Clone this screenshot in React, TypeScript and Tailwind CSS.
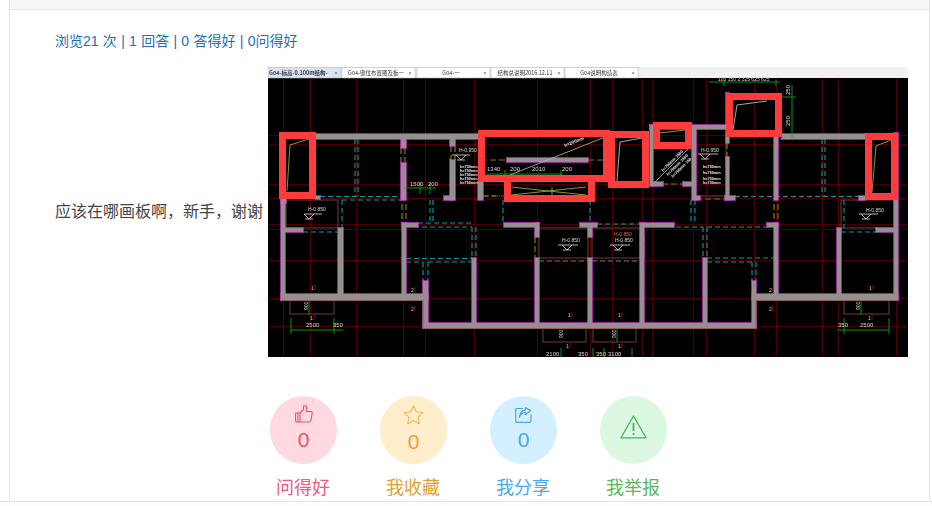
import React from "react";

type R = [number, number, number, number];

const walls: R[] = [
  [281, 198, 285, 300], [281, 294, 428, 300], [423, 281, 428, 328], [423, 323, 756, 328],
  [752, 281, 756, 328], [752, 294, 898, 300], [894, 133, 898, 300], [338, 228, 343, 300],
  [402, 223, 406, 300], [472, 258, 476, 328], [535, 223, 539, 237], [535, 258, 539, 328],
  [588, 224, 592, 237], [588, 258, 592, 328], [640, 223, 644, 328], [703, 258, 707, 328],
  [774, 223, 778, 300], [837, 228, 841, 300], [285, 228, 303, 232], [402, 223, 418, 227],
  [504, 223, 539, 227], [580, 223, 597, 227], [641, 223, 674, 227], [767, 223, 778, 227],
  [876, 228, 894, 232], [316, 134, 478, 139], [401, 139, 406, 148], [401, 163, 406, 200],
  [450, 139, 455, 146], [450, 160, 455, 200], [444, 196, 453, 200], [478, 182, 483, 200],
  [316, 196, 320, 199], [507, 158, 588, 162], [650, 125, 653, 186], [650, 125, 726, 129],
  [692, 129, 696, 200], [726, 93, 729, 143], [726, 157, 729, 200], [725, 196, 735, 200],
  [774, 134, 778, 200], [782, 134, 865, 139], [859, 196, 865, 200], [653, 182, 663, 186],
  [683, 182, 692, 186], [281, 198, 285, 200], [696, 196, 700, 200], [281, 198, 286, 203],
];

const redBoxes: R[] = [
  [279, 132, 316, 199], [478, 130, 610, 182], [504, 175, 595, 202], [608, 131, 649, 188],
  [653, 122, 692, 149], [726, 93, 782, 137], [865, 133, 898, 200],
];

const gridH = [135, 144, 184, 198, 224, 229, 260, 298, 326];
const gridV = [283, 310, 356, 403, 425, 474, 537, 590, 612, 642, 652, 693, 706, 754, 776, 822, 838, 896];

const tealDashes = [
  "M320 196.5H402", "M342 200H402", "M342 200V228", "M303 232H338", "M355 139V196", "M358 139V196",
  "M418 223H472", "M406 227H472", "M472 227V258", "M476 227V258", "M406 258.500H472", "M406 262H423",
  "M428 262H472", "M423 262V281", "M428 262V281", "M539 261H588", "M592 261H640", "M644 227H703",
  "M707 227H767", "M703 227V258", "M707 227V258", "M707 258H774", "M707 262H752", "M756 262V281",
  "M752 262V281", "M735 196.500H859", "M780 139H782", "M822 139V196", "M825 139V196", "M841 232H876",
  "M483 196H500", "M844 200V228", "M597 224H640", "M691 200V224", "M695 200V224", "M430 200V224",
  "M433 200V224", "M503 200V224", "M590 200V224",
];

const olive = [
  "M401 148V163", "M405 148V163", "M451 146V160", "M455 146V160", "M402 204V222", "M406 204V222",
  "M535 237V258", "M644 237V258", "M727 143V157", "M774 204V222", "M778 204V222", "M481 160H507",
  "M588 160H605", "M483 196H507", "M653 184H683", "M696 199H727",
];

const brown: R[] = [
  [286, 200, 338, 228], [539, 228, 588, 258], [592, 228, 640, 258], [841, 200, 894, 228],
  [290, 300, 334, 314], [543, 328, 586, 342], [593, 328, 636, 342], [844, 300, 889, 314],
  [696, 129, 726, 196],
];

const labels: [number, number, string, string?][] = [
  [459, 152, "H-0.950"], [308, 211, "H-0.850"], [701, 152, "H-0.950"], [866, 212, "H-0.850"],
  [562, 242, "H-0.850"], [615, 242, "H-0.850"], [614, 236, "H-0.850", "#ff6a00"],
  [410, 186, "1500"], [428, 186, "200"], [487, 171, "1340"], [510, 171, "200"], [532, 171, "2010"],
  [562, 171, "200"], [306, 327, "2500"], [333, 327, "350"], [838, 327, "350"], [860, 327, "2500"],
  [546, 356, "2100"], [578, 356, "350"], [596, 356, "350"], [608, 356, "3100"],
];

function Cad() {
  return (
    <svg width="640" height="290" viewBox="268 67 640 290" className="block shrink-0 blur-[0.35px]">
      <rect x="268" y="67" width="640" height="290" fill="#000" />
      <rect x="268" y="67" width="640" height="11" fill="#f1f1f1" />
      {[268, 342, 417, 491, 565].map((x, i) => (
        <g key={x}>
          <rect x={x} y="67.500" width="73" height="10.500" fill={i === 0 ? "#dbe6f5" : "#fff"} stroke="#b5b5b5" strokeWidth="0.6" />
          <text x={x + (i === 0 ? 1 : 34)} y="74.500" fontSize="5.500" fill="#333" fontWeight={i === 0 ? 700 : 400} textAnchor={i === 0 ? "start" : "middle"} fontFamily="'Noto Sans CJK SC',sans-serif">
            {["G04-标高-0.100m结构-", "G04-键位布置图及板一", "G04-一", "结构总说明2016.12.11", "G04说明构造表"][i]}
          </text>
          <text x={x + 68} y="74.500" fontSize="6" fill="#666" textAnchor="middle">×</text>
        </g>
      ))}
      {gridH.map((y) => <path key={y} d={`M268 ${y}.5H908`} stroke="#5c0000" strokeWidth="0.8" />)}
      {gridV.map((x) => <path key={x} d={`M${x}.5 78V357`} stroke="#5c0000" strokeWidth="0.8" />)}
      {brown.map(([a, b, c, d], i) => (
        <rect key={i} x={a} y={b} width={c - a} height={d - b} fill="none" stroke="#80403f" strokeWidth="0.9" />
      ))}
      {tealDashes.map((d, i) => <path key={i} d={d} stroke="#0b9aa3" strokeWidth="1.100" strokeDasharray="5 3" fill="none" />)}
      {olive.map((d, i) => <path key={i} d={d} stroke="#7e7d10" strokeWidth="1.200" strokeDasharray="6 3" fill="none" />)}
      {walls.map(([a, b, c, d], i) => (
        <rect key={i} x={a - 0.4} y={b - 0.4} width={c - a + 0.8} height={d - b + 0.8} fill="none" stroke="#d23fd2" strokeWidth="0.7" />
      ))}
      {walls.map(([a, b, c, d], i) => (
        <rect key={i} x={a} y={b} width={c - a} height={d - b} fill="#968f8f" />
      ))}
      <path d="M280.500 300.500H423V328.500H756V300.500H898" fill="none" stroke="#8d5f5f" strokeWidth="1" />
      <g stroke="#0aa60a" strokeWidth="0.9" fill="none">
        <path d="M404 188H436M430 183V194M420 182V194" />
        <path d="M291 330H343M291 318V334M334 318V334" />
        <path d="M837 330H889M844 318V334M889 318V334" />
        <path d="M709 82H780M724 80V86M776 80V86M781 93V135M770 97H796M792 85V137" />
        <path d="M486 174H562M505 170V176M561 170V176" />
        <path d="M309 300V315M861 300V315M617 328V342M561 348V357M593 348V357M604 348V357M632 348V357" />
      </g>
      <g stroke="#ddd" strokeWidth="0.8" fill="none">
        <path d="M452 155H470M456 155L461 160L466 155M457 160H465" />
        <path d="M304 214H322M304 214L309 219L314 214M305 219H313" />
        <path d="M698 154H718M700 154L705 159L710 154M701 159H709" />
        <path d="M859 214H878M861 214L866 219L871 214M862 219H870" />
        <path d="M558 245H578M562 245L567 250L572 245M563 250H571" />
        <path d="M610 245H630M613 245L618 250L623 245M614 250H622" />
        <path d="M510 175L605 137" stroke="#bbb" />
        <path d="M655 182L690 147" stroke="#bbb" />
      </g>
      <g fill="#f0f0f0" fontSize="3.800" fontFamily="'Liberation Sans',sans-serif" fontWeight="700">
        {[168, 172, 176, 180, 184].map((y) => <text key={y} x="460" y={y}>h=750mm</text>)}
        {[168, 174, 180, 184].map((y) => <text key={y} x="703" y={y}>h=750mm</text>)}
        <text x="0" y="0" transform="translate(663,172) rotate(-45)" fontSize="4">h=750mm 1500</text>
        <text x="0" y="0" transform="translate(668,176) rotate(-45)" fontSize="4">h=750mm 1500</text>
        <text x="0" y="0" transform="translate(673,178) rotate(-45)" fontSize="4">h=750mm 150</text>
        <text x="0" y="0" transform="translate(565,147) rotate(-22)" fontSize="4.500">h=200mm</text>
      </g>
      <g fontSize="6" fontFamily="'Liberation Sans',sans-serif">
        {labels.map(([x, y, t, c], i) => <text key={i} x={x} y={y} fill={c ?? "#d8d8d8"} fontSize={t.startsWith("H") ? 5 : 6}>{t}</text>)}
        <text transform="translate(790,126) rotate(-90)" fill="#d8d8d8">250</text>
        <text transform="translate(790,95) rotate(-90)" fill="#d8d8d8">250</text>
        <text transform="translate(308,310) rotate(-90)" fill="#d8d8d8" fontSize="5">900</text>
        <text transform="translate(860,310) rotate(-90)" fill="#d8d8d8" fontSize="5">900</text>
        <text transform="translate(563,338) rotate(-90)" fill="#d8d8d8" fontSize="5">900</text>
        <text transform="translate(616,338) rotate(-90)" fill="#d8d8d8" fontSize="5">900</text>
        {[[311, 290], [411, 292], [411, 311], [310, 320], [568, 317], [618, 317], [769, 292], [769, 311], [869, 290], [868, 320], [566, 348], [618, 348]].map(([x, y], i) => (
          <g key={i}>
            <text x={x} y={y} fontSize="5" fill="#ccc">{i === 1 || i === 2 || i === 6 || i === 7 ? 2 : 1}</text>
            <path d={`M${x + 4} ${y - 5}V${y}`} stroke="#a00" strokeWidth="1" />
          </g>
        ))}
        <text x="718" y="81" fill="#ccc" fontSize="5">100 150 2.325 625 625</text>
      </g>
      <g fill="none" strokeWidth="0.9">
        <path d="M287 191L290 145L309 139" stroke="#a3a32a" />
        <path d="M872 192L876 146L891 140" stroke="#a3a32a" />
        <path d="M617 181L620 142L642 138" stroke="#bbb" />
        <path d="M733 130L737 105L767 101" stroke="#bbb" />
        <path d="M660 133L685 130" stroke="#a3a32a" />
        <path d="M511 187L586 195M511 195L586 187M552 187V195" stroke="#a3a32a" />
      </g>
      {redBoxes.map(([a, b, c, d], i) => (
        <rect key={i} x={a + 3.500} y={b + 3.500} width={c - a - 7} height={d - b - 7} fill="none" stroke="#ff3b3b" strokeWidth="7" />
      ))}
    </svg>
  );
}

const ThumbIcon = () => (
  <svg width="18" height="18" viewBox="0 0 18 18" fill="none" stroke="#f0506e" strokeWidth="1.100" strokeLinejoin="round">
    <path d="M.6 8H5V17H2Q.6 17 .6 15.500Z" />
    <path d="M3 8V17" />
    <path d="M5 8L8.500 4.500V1.800Q8.500.6 10 .7 11.800 1 11.500 3.500L11 6.500H15.800Q17.500 6.700 17.200 8.300L16 15.300Q15.700 17 14 17H5" />
  </svg>
);

const StarIcon = () => (
  <svg width="21" height="20" viewBox="0 0 21 20" fill="none" stroke="#f5b350" strokeWidth="1.100" strokeLinejoin="round">
    <path d="M10.500.9L13.300 6.800 19.900 7.700 15.100 12.200 16.300 18.700 10.500 15.500 4.700 18.700 5.900 12.200 1.100 7.700 7.700 6.800Z" />
  </svg>
);

const ShareIcon = () => (
  <svg width="17" height="16" viewBox="0 0 17 16" fill="none" stroke="#42a9f0" strokeWidth="1.200" strokeLinejoin="round">
    <path d="M8 1.500H1.800Q.7 1.500.7 2.600V14Q.7 15.300 1.800 15.300H14.500Q16 15.300 16 14V7.500" />
    <path d="M4.500 10.500Q5 6 10.500 5.300V7.500L15.800 3.500 10.500.6V2.800Q5 3.500 4.500 10.500Z" />
  </svg>
);

const AlertIcon = () => (
  <svg width="27" height="24" viewBox="0 0 27 24" fill="none" stroke="#3cb55a" strokeWidth="1.300" strokeLinejoin="round">
    <path d="M13.500 1L26 22.800H1Z" />
    <path d="M13.500 8V16" strokeWidth="1.800" />
    <path d="M13.500 18V19.800" strokeWidth="1.800" />
  </svg>
);

const actions = [
  { label: "问得好", icon: <ThumbIcon />, value: "0", circle: "bg-[#ffd9e0]", text: "text-[#f0506e]", labelColor: "text-[#ee5a80]", box: "pt-[9px]" },
  { label: "我收藏", icon: <StarIcon />, value: "0", circle: "bg-[#ffedcc]", text: "text-[#e8a138]", labelColor: "text-[#e3a032]", box: "pt-[9px]" },
  { label: "我分享", icon: <ShareIcon />, value: "0", circle: "bg-[#d4efff]", text: "text-[#42a9f0]", labelColor: "text-[#48a8ee]", box: "pt-[11px]" },
  { label: "我举报", icon: <AlertIcon />, value: "", circle: "bg-[#dcf8e2]", text: "text-[#3cb55a]", labelColor: "text-[#5ab55e]", box: "pt-[19px]" },
];

export default function App() {
  return (
    <div className="h-[506px] w-[932px] overflow-hidden bg-white font-['Liberation_Sans','Noto_Sans_CJK_SC',sans-serif]">
      <div className="ml-[9px] h-[501px] w-[921px] border-x border-[#e4e4e4]">
        <div className="h-[10px] border-b border-[#e6e6e6] bg-[#f8f8f8]" />
        <div className="pl-[45px]">
          <p className="pt-[21px] text-[14px] leading-[20px] text-[#1d6fb8] [word-spacing:0.4px]">
            浏览21 次 | 1 回答 | 0 答得好 | 0问得好
          </p>
          <div className="mt-[16px] flex items-center gap-[5px]">
            <span className="w-[208px] shrink-0 whitespace-nowrap text-[16px] leading-[22px] text-[#444]">
              应该在哪画板啊，新手，谢谢
            </span>
            <Cad />
          </div>
          <div className="ml-[215px] mt-[39px] flex gap-[43px]">
            {actions.map((a) => (
              <div key={a.label} className="flex w-[67px] flex-col items-center">
                <div className={`flex h-[68px] w-[67px] flex-col items-center rounded-full ${a.box} ${a.circle} ${a.text}`}>
                  {a.icon}
                  {a.value && <span className="mt-[4px] text-[21px] leading-[26px]">{a.value}</span>}
                </div>
                <span className={`mr-[1px] mt-[11px] whitespace-nowrap text-[18px] leading-[26px] ${a.labelColor}`}>{a.label}</span>
              </div>
            ))}
          </div>
        </div>
      </div>
      <div className="h-[5px] border-t border-[#e4e4e4] bg-[#fdfdfd]" />
    </div>
  );
}
